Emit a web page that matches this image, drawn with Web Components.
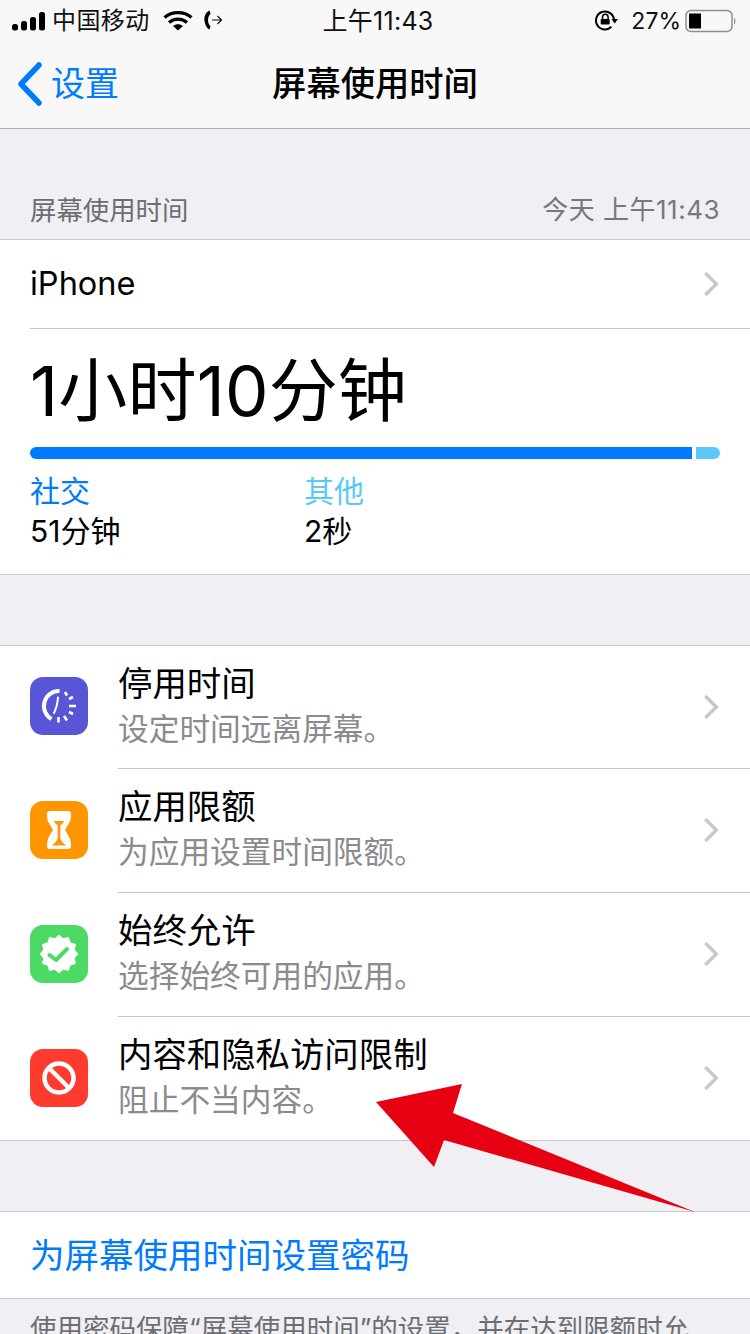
<!DOCTYPE html>
<html lang="zh-CN"><head><meta charset="utf-8"><title>屏幕使用时间</title>
<style>
html,body{margin:0;height:1334px;overflow:hidden;background:#efeff4}
body{font-family:Inter,"Noto Sans CJK SC",sans-serif;color:#000}
</style></head><body>
<app-screen>
  <status-bar></status-bar>
  <nav-bar back="设置" title="屏幕使用时间"></nav-bar>
  <section-head label="屏幕使用时间" when="今天 上午11:43"></section-head>
  <usage-card></usage-card>
  <row-group>
    <setting-row title="停用时间" sub="设定时间远离屏幕。" color="#5856d6" icon="downtime" first></setting-row>
    <setting-row title="应用限额" sub="为应用设置时间限额。" color="#ff9500" icon="hourglass"></setting-row>
    <setting-row title="始终允许" sub="选择始终可用的应用。" color="#4cd964" icon="check"></setting-row>
    <setting-row title="内容和隐私访问限制" sub="阻止不当内容。" color="#ff3b30" icon="block" last></setting-row>
  </row-group>
  <link-row>为屏幕使用时间设置密码</link-row>
  <foot-note>使用密码保障“屏幕使用时间”的设置，并在达到限额时允许延长时间。</foot-note>
  <red-arrow></red-arrow>
</app-screen>
<script>
const chevron=`<svg width="18" height="28" viewBox="0 0 18 28" fill="none"><path d="M3.300 3 14.300 14 3.300 25" stroke="#c7c7cc" stroke-width="3.400"/></svg>`;
const seal=(()=>{let p=[];for(let i=0;i<24;i++){const r=i%2?15.8:19,t=(i*15-90)*Math.PI/180;p.push((29+r*Math.cos(t)).toFixed(2)+','+(29+r*Math.sin(t)).toFixed(2));}return p.join(' ');})();
const icons={
downtime:`<svg viewBox="0 0 58 58" width="58" height="58" fill="none" stroke="#fff" stroke-linecap="round"><path d="M29.500 14A15 15 0 0 0 21.500 42" stroke-width="4" stroke-linecap="butt"/><path d="M28 20.500C27.500 26 26 32 24 36" stroke-width="2"/><g stroke-width="2.600" stroke-linecap="butt"><path d="M35 15 37 18.500M39 22 43 20M39 29H46M39 35 43 37M34 39 37 43.500M28.500 40V45.500"/></g></svg>`,
hourglass:`<svg viewBox="0 0 58 58" width="58" height="58"><path fill="#fff" d="M20 10H38Q41 10 41 13V15Q41 20 38 24L35 29 38 34Q41 38 41 43V45Q41 48 38 48H20Q17 48 17 45V43Q17 38 20 34L23 29 20 24Q17 20 17 15V13Q17 10 20 10Z"/><path fill="#ff9500" d="M24 20H34Q33.500 22.500 30.300 24.500V37Q31 40.500 36 44.500H22Q27 40.500 27.700 37V24.500Q24.500 22.500 24 20Z"/></svg>`,
check:`<svg viewBox="0 0 58 58" width="58" height="58"><polygon fill="#fff" stroke="#fff" stroke-width="1" stroke-linejoin="round" points="${seal}"/><path d="M19.500 30 26 35 37 24" fill="none" stroke="#4cd964" stroke-width="4" stroke-linecap="round" stroke-linejoin="round"/></svg>`,
block:`<svg viewBox="0 0 58 58" width="58" height="58" fill="none" stroke="#fff" stroke-width="4.500"><circle cx="29" cy="29" r="14.500"/><path d="M18.500 18.500 39.500 39.500"/></svg>`
};
function def(name,css,html){
  customElements.define(name,class extends HTMLElement{
    connectedCallback(){
      if(this.shadowRoot)return;
      const r=this.attachShadow({mode:'open'});
      const a=n=>this.getAttribute(n)||'';
      r.innerHTML=`<style>${css}</style>`+(typeof html==='function'?html(a,this):html);
    }
  });
}
def('app-screen',`:host{display:block;position:relative;width:750px;height:1334px;overflow:hidden;background:#efeff4}`,`<slot></slot>`);
def('status-bar',`:host{display:flex;align-items:center;height:40px;background:#f8f8f8;position:relative;font-size:24px;color:#111;padding:2px 0 0;box-sizing:border-box}
.l{display:flex;align-items:center;padding-left:12px;flex:1}
.c{position:absolute;left:6px;right:0;text-align:center;top:2px;line-height:38px;font-size:25px;letter-spacing:.3px}
.r{display:flex;align-items:center}
.car{margin-left:6px;line-height:38px;letter-spacing:.4px}
svg{display:block}`,
`<div class="l"><svg width="34" height="20" viewBox="0 0 34 20"><g fill="#000"><rect x="0" y="13" width="6" height="6.500" rx="2.500"/><rect x="9" y="10" width="6" height="9.500" rx="2.500"/><rect x="18" y="6" width="6" height="13.500" rx="2.500"/><rect x="27" y="1" width="6" height="18.500" rx="2.500"/></g></svg>
<span class="car">中国移动</span>
<svg style="margin-left:13px" width="30" height="22" viewBox="0 0 30 22" fill="none" stroke="#000" stroke-width="3.200"><path d="M1.500 7.500C9 1 21 1 28.500 7.500"/><path d="M6 12.500C11 8 19 8 24 12.500"/><path d="M15 20.500 10 16C13 13.800 17 13.800 20 16Z" fill="#000" stroke="none"/></svg>
<svg style="margin-left:11px;margin-top:-3px" width="20" height="20" viewBox="0 0 20 20" fill="none"><path d="M5.500 0.500C1 2.500 0 7.500 0.500 10.500C1 15 3 18.500 5.500 19.500L6.500 16.500C4.500 14.500 4 12 4 10C4 8 4.500 6 6.500 3.500Z" fill="#000"/><path d="M8 10H17.500M13.500 6 17.500 10 13.500 14" stroke="#111" stroke-width="1.200"/></svg></div>
<div class="c">上午11:43</div>
<div class="r"><svg width="24" height="24" viewBox="0 0 24 24" fill="none"><path d="M19 11.500A9 9 0 1 0 16.400 17.800" stroke="#000" stroke-width="2"/><path d="M16.500 10H23L19.700 14.500Z" fill="#000"/><rect x="5.700" y="10" width="9" height="5.500" rx="1" fill="#000"/><path d="M7.500 10V8a2.800 2.800 0 0 1 5.600 0V10" stroke="#000" stroke-width="1.500"/></svg>
<span style="margin-left:12px;font-size:23px;line-height:38px">27%</span>
<svg style="margin:0 12px 0 4px" width="53" height="24" viewBox="0 0 53 24"><rect x="1" y="1.500" width="46" height="21" rx="5" fill="none" stroke="#8e8e8e" stroke-width="1.500"/><rect x="4" y="4.500" width="12" height="15" fill="#000"/><path d="M49 8.500C51 9.500 51 14.500 49 15.500Z" fill="#999"/></svg></div>`);
def('nav-bar',`:host{display:flex;align-items:center;justify-content:center;position:relative;height:89px;box-sizing:border-box;background:#f8f8f8;border-bottom:1px solid #b2b2b4}
.b{position:absolute;left:17px;top:22px;display:flex;align-items:center;color:#007aff;font-size:34px;line-height:44px}
.b svg{display:block;margin-right:8px}
.t{font-size:34.300px;font-weight:500;line-height:44px;margin-top:-1px;color:#000}`,
a=>`<div class="b"><svg width="26" height="44" viewBox="0 0 26 44" fill="none"><path d="M22 3 4 22 22 41" stroke="#007aff" stroke-width="5.500" stroke-linecap="round" stroke-linejoin="round"/></svg><span>${a('back')}</span></div><div class="t">${a('title')}</div>`);
def('section-head',`:host{display:flex;justify-content:space-between;align-items:flex-end;height:111px;box-sizing:border-box;padding:0 30px 10px;color:#6d6d72;font-size:26.400px;line-height:38px;border-bottom:1px solid #c8c7cc}
span:last-child{color:#77777c;font-size:26px;letter-spacing:.5px}`,
a=>`<span>${a('label')}</span><span>${a('when')}</span>`);
def('usage-card',`:host{display:block;background:#fff;border-bottom:1px solid #c8c7cc;height:335px;box-sizing:border-box}
.i{display:flex;justify-content:space-between;align-items:center;height:89px;font-size:32.500px;padding-right:30px;margin-left:30px;border-bottom:1px solid #c8c7cc;box-sizing:border-box}
.i span{margin-top:-2px}
.i svg{display:block}
.big{font-size:69px;line-height:80px;padding:22px 30px 0;letter-spacing:.2px;height:90px}
.bar{display:flex;gap:4px;margin:6px 30px 0;height:12px}
.bar i{display:block;background:#007aff;width:662px;border-radius:6px 0 0 6px}
.bar b{display:block;background:#5ac8fa;flex:1;border-radius:0 6px 6px 0}
.cats{display:grid;grid-template-columns:274px 1fr;padding:12px 30px 0 30px;font-size:30px;line-height:40px}
.cats u{text-decoration:none;color:#007aff;display:block}
.cats s{text-decoration:none;color:#5ac8fa;display:block}
.cats span{display:block;color:#000}`,
`<div class="i"><span>iPhone</span>${chevron}</div>
<div class="big">1小时10分钟</div>
<div class="bar"><i></i><b></b></div>
<div class="cats"><div><u>社交</u><span>51分钟</span></div><div><s>其他</s><span>2秒</span></div></div>`);
def('row-group',`:host{display:block;margin-top:70px;background:#fff;border-top:1px solid #c8c7cc;border-bottom:1px solid #c8c7cc}`,`<slot></slot>`);
def('setting-row',`:host{display:flex;align-items:center;height:124px;box-sizing:border-box;padding-left:30px}
:host([first]),:host([last]){height:123px}
:host(:not([last])) .m{border-bottom:1px solid #c8c7cc}
.ic{width:58px;height:58px;border-radius:13px;flex:none;display:block;margin:-3px 30px 0 0}
:host([last]) .ic{margin-top:-1px}
.ic svg{display:block}
.m{flex:1;align-self:stretch;display:flex;align-items:center;justify-content:space-between;padding-right:30px;box-sizing:border-box}
.m>svg{margin-top:-1px}
.x{padding-bottom:4px}
.t{font-size:34.400px;line-height:44px;color:#000;padding-bottom:1px}
.s{font-size:30.700px;line-height:40px;color:#8a8a8f;margin-top:2px}`,
a=>`<div class="ic" style="background:${a('color')}">${icons[a('icon')]}</div><div class="m"><div class="x"><div class="t">${a('title')}</div><div class="s">${a('sub')}</div></div>${chevron}</div>`);
def('link-row',`:host{display:flex;align-items:center;height:88px;box-sizing:border-box;margin-top:70px;background:#fff;border-top:1px solid #c8c7cc;border-bottom:1px solid #c8c7cc;padding:0 0 4px 30px;color:#007aff;font-size:34.500px}`,`<slot></slot>`);
def('foot-note',`:host{display:block;padding:12px 35px 0 30px;color:#6d6d72;font-size:26.500px;line-height:34px}`,`<slot></slot>`);
def('red-arrow',`:host{display:block;position:absolute;left:0;top:0;width:750px;height:1334px;pointer-events:none}svg{display:block}`,
`<svg width="750" height="1334" viewBox="0 0 750 1334"><polygon fill="#e60012" points="376,1102 462,1084 453,1113 695,1212 444,1140 434,1167"/></svg>`);
</script>
</body></html>
